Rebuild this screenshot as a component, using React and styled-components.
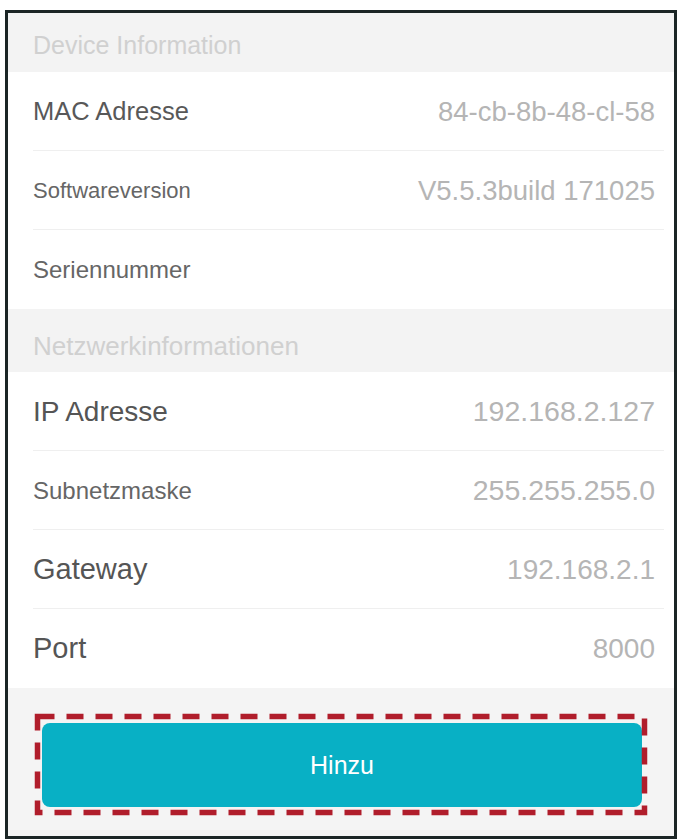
import React from "react";
import styled, { createGlobalStyle } from "styled-components";

const GlobalStyle = createGlobalStyle`
  html, body {
    margin: 0;
    padding: 0;
    background: #ffffff;
  }
  body {
    font-family: "Liberation Sans", Arial, sans-serif;
  }
`;

const Frame = styled.div`
  box-sizing: border-box;
  width: 672px;
  height: 829px;
  margin: 10px 0 0 5px;
  border: 3px solid #1b2525;
  background: #f4f4f4;
  display: flex;
  flex-direction: column;
`;

const SectionHeader = styled.div`
  height: ${(p) => p.$height}px;
  flex-shrink: 0;
  display: flex;
  align-items: flex-end;
  padding: 0 0 ${(p) => p.$bottom}px 25px;
  box-sizing: border-box;
  font-size: ${(p) => p.$size}px;
  color: #d0d0d0;
  background: #f3f3f3;
`;

const Row = styled.div`
  position: relative;
  height: 79px;
  flex-shrink: 0;
  display: flex;
  align-items: center;
  justify-content: space-between;
  padding: 0 19px 0 25px;
  box-sizing: border-box;
  background: #ffffff;

  &::after {
    content: "";
    display: ${(p) => (p.$divider ? "block" : "none")};
    position: absolute;
    left: 25px;
    right: 10px;
    bottom: 0;
    height: 1px;
    background: #efefef;
  }
`;

const Label = styled.span`
  font-size: ${(p) => p.$size}px;
  color: ${(p) => p.$color || "#555555"};
  white-space: nowrap;
`;

const Value = styled.span`
  font-size: ${(p) => p.$size || 27}px;
  color: #b5b5b5;
  white-space: nowrap;
`;

const Footer = styled.div`
  flex: 1;
  padding: 35px 32px 0 34px;
  background: #f4f4f4;
`;

const ButtonWrap = styled.div`
  position: relative;
`;

const AddButton = styled.button`
  display: flex;
  align-items: center;
  justify-content: center;
  width: 100%;
  height: 84px;
  border: none;
  border-radius: 8px;
  background: #08b0c5;
  color: #ffffff;
  font-family: "Liberation Sans", Arial, sans-serif;
  font-size: 25px;
  cursor: pointer;
`;

const Highlight = styled.svg`
  position: absolute;
  left: -7px;
  top: -9px;
  width: calc(100% + 12px);
  height: calc(100% + 17px);
  pointer-events: none;
  overflow: visible;
`;

const device = [
  { label: "MAC Adresse", size: 25.5, color: "#585858", value: "84-cb-8b-48-cl-58", vsize: 27.5 },
  { label: "Softwareversion", size: 22, color: "#666666", value: "V5.5.3build 171025", vsize: 27.5 },
  { label: "Seriennummer", size: 24, color: "#666666", value: "" },
];

const network = [
  { label: "IP Adresse", size: 28, color: "#555555", value: "192.168.2.127", vsize: 28.5 },
  { label: "Subnetzmaske", size: 24, color: "#666666", value: "255.255.255.0", vsize: 28.5 },
  { label: "Gateway", size: 29, color: "#555555", value: "192.168.2.1", vsize: 28 },
  { label: "Port", size: 29, color: "#555555", value: "8000", vsize: 28 },
];

function InfoRows({ items }) {
  return items.map((item, i) => (
    <Row key={item.label} $divider={i < items.length - 1}>
      <Label $size={item.size} $color={item.color}>
        {item.label}
      </Label>
      <Value $size={item.vsize}>{item.value}</Value>
    </Row>
  ));
}

export default function App() {
  return (
    <>
      <GlobalStyle />
      <Frame>
        <SectionHeader $height={59} $bottom={12} $size={25}>
          Device Information
        </SectionHeader>
        <InfoRows items={device} />
        <SectionHeader $height={63} $bottom={10} $size={26}>
          Netzwerkinformationen
        </SectionHeader>
        <InfoRows items={network} />
        <Footer>
          <ButtonWrap>
            <AddButton>Hinzu</AddButton>
            <Highlight>
              <rect
                x="2.5"
                y="2.5"
                width="calc(100% - 5px)"
                height="calc(100% - 5px)"
                fill="none"
                stroke="#b01d2b"
                strokeWidth="5.5"
                strokeDasharray="17 12"
              />
            </Highlight>
          </ButtonWrap>
        </Footer>
      </Frame>
    </>
  );
}
